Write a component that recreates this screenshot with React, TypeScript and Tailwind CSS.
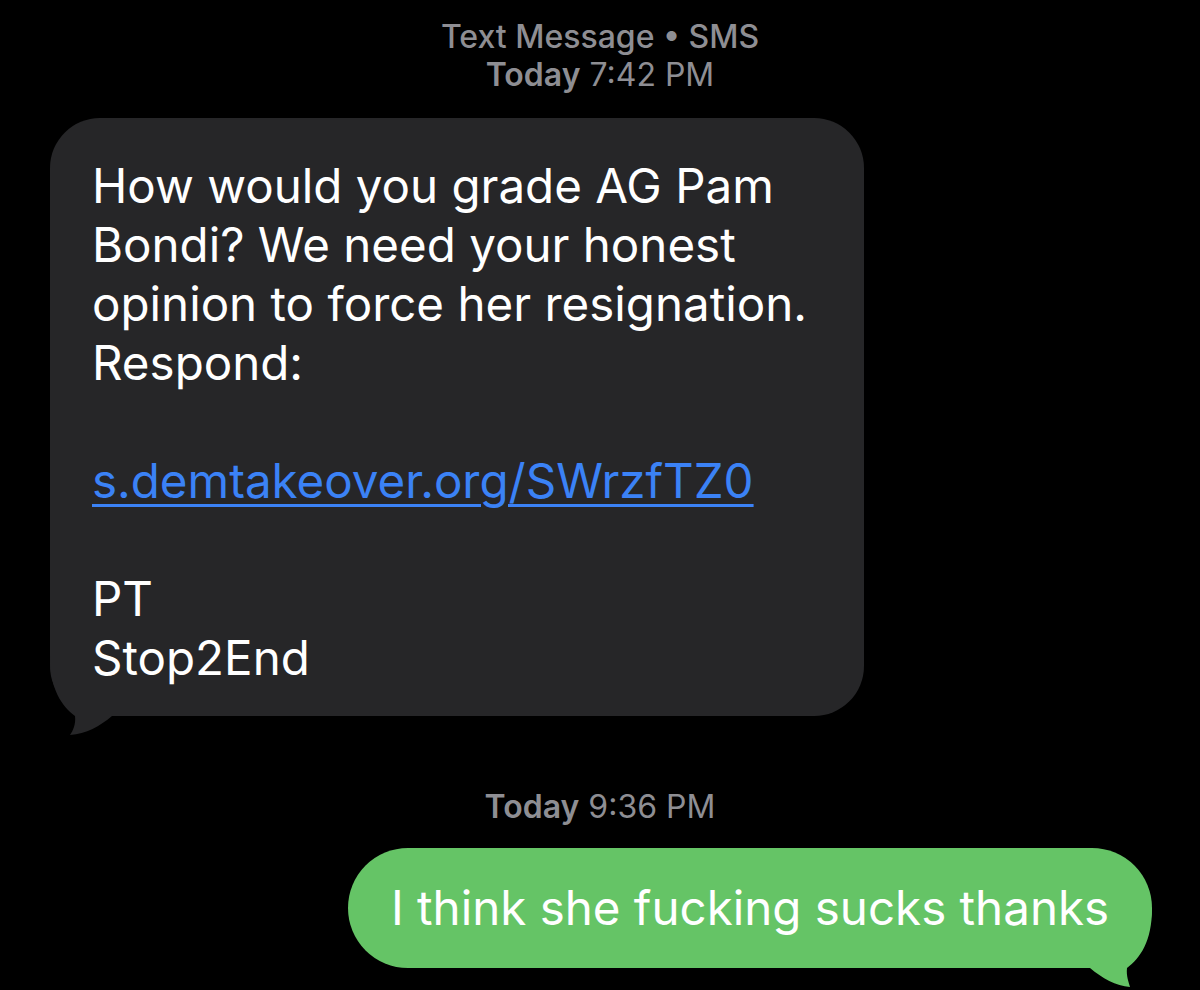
export default function App() {
  return (
    <div className="w-[1200px] h-[990px] bg-black overflow-hidden flex flex-col font-['Inter','Liberation_Sans',sans-serif] text-white">
      {/* header */}
      <div className="pt-[18px] text-center text-[32px] leading-[38px] text-[#8e8e93]">
        <div className="font-medium">Text Message • SMS</div>
        <div>
          <span className="font-semibold">Today</span> 7:42 PM
        </div>
      </div>

      {/* incoming bubble */}
      <div className="relative ml-[50px] mt-[24px] w-[814px] rounded-[50px] bg-[#262628] pl-[42px] pr-[20px] pt-[38px] pb-[29px] text-[47.5px] leading-[59px] whitespace-nowrap">
        <svg className="absolute left-0 bottom-[-20px]" width="80" height="90" viewBox="0 0 80 90">
          <path d="M0,10 C0,44 12,60 25,70 C26,78 23,85 20,89 C36,88 50,80 62,70 L80,70 L80,10 Z" fill="#262628" />
        </svg>
        <div className="relative">
          <div>How would you grade AG Pam</div>
          <div>Bondi? We need your honest</div>
          <div>opinion to force her resignation.</div>
          <div>Respond:</div>
          <div>&nbsp;</div>
          <div className="text-[#3b82f6] underline decoration-[2.5px] underline-offset-[6px]">s.demtakeover.org/SWrzfTZ0</div>
          <div>&nbsp;</div>
          <div>PT</div>
          <div>Stop2End</div>
        </div>
      </div>

      {/* timestamp */}
      <div className="mt-[72px] text-center text-[32px] leading-[38px] text-[#8e8e93]">
        <span className="font-semibold">Today</span> 9:36 PM
      </div>

      {/* outgoing bubble */}
      <div className="relative self-end mr-[48px] mt-[22px] w-[804px] h-[120px] rounded-full bg-[#65c466] flex items-center justify-center text-[47.5px] whitespace-nowrap">
        <svg className="absolute right-0 bottom-[-20px]" width="80" height="90" viewBox="0 0 80 90">
          <path d="M80,10 C80,44 68,60 55,70 C54,78 57,85 58,89 C44,88 30,80 18,70 L0,70 L0,10 Z" fill="#65c466" />
        </svg>
        <span className="relative">I think she fucking sucks thanks</span>
      </div>
    </div>
  );
}
